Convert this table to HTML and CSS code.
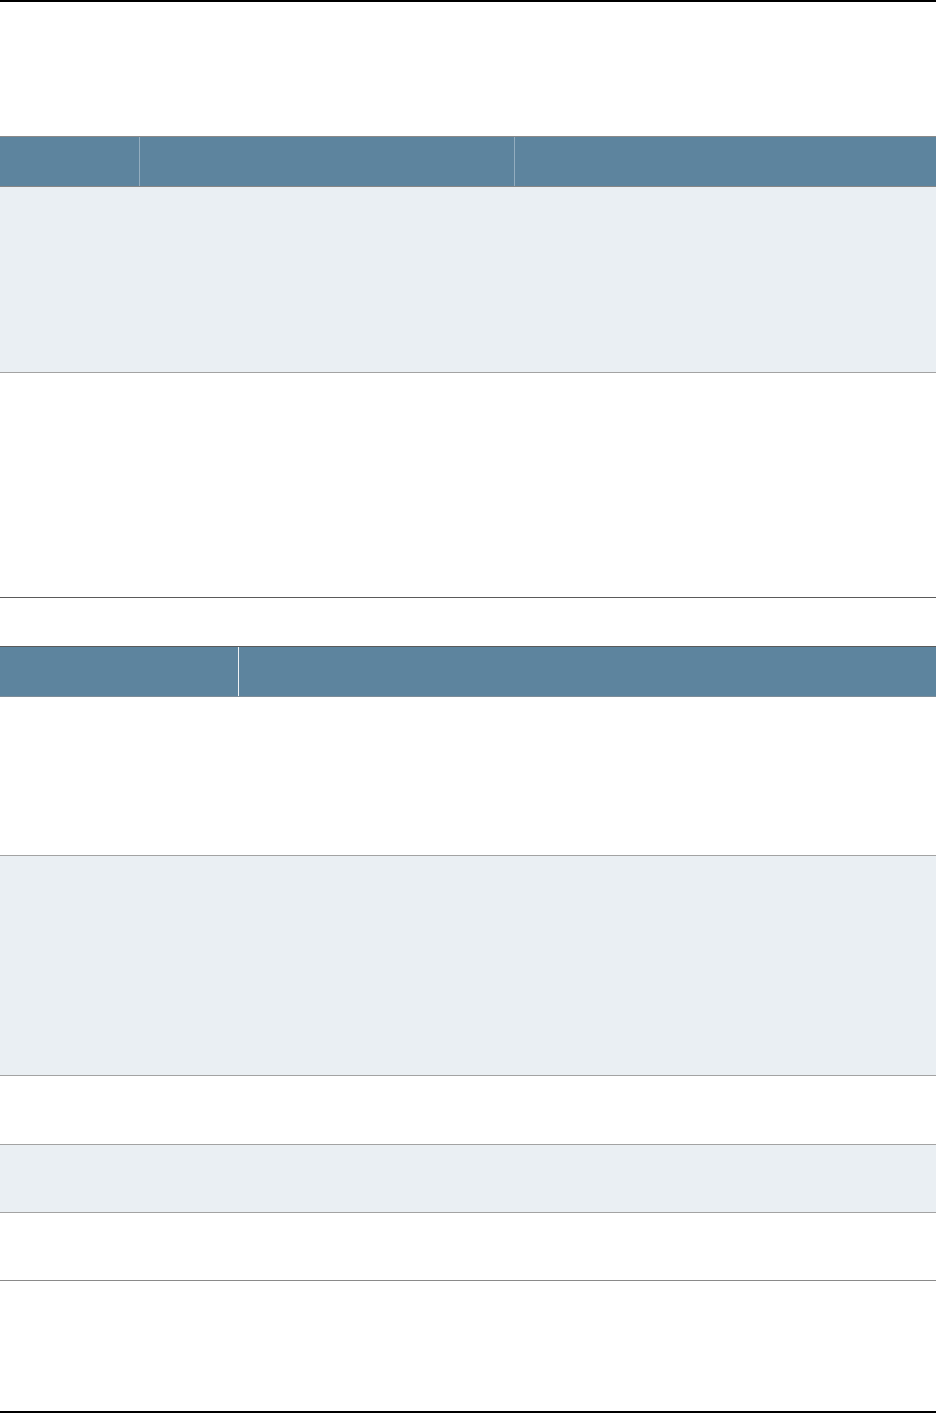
FILE: index.html
```html
<!DOCTYPE html>
<html>
<head>
<meta charset="utf-8">
<link rel="stylesheet" href="styles.css">
</head>
<body>
<div class="page">
  <div class="rule"></div>
  <div class="table t1">
    <div class="row head">
      <div class="cell"></div><div class="cell"></div><div class="cell"></div>
    </div>
    <div class="row shade r1"></div>
    <div class="row r2 last"></div>
  </div>
  <div class="table t2">
    <div class="row head">
      <div class="cell"></div><div class="cell"></div>
    </div>
    <div class="row a"></div>
    <div class="row shade b"></div>
    <div class="row c"></div>
    <div class="row shade d"></div>
    <div class="row e"></div>
  </div>
  <div class="rule bottom"></div>
</div>
</body>
</html>
```
FILE: styles.css
```css
html, body {
  margin: 0;
  padding: 0;
  background: #ffffff;
  font-family: "Liberation Sans", Arial, sans-serif;
}
.page {
  width: 936px;
  height: 1413px;
  display: flex;
  flex-direction: column;
}
.rule {
  height: 2px;
  background: #000000;
  flex: none;
}
.rule.bottom {
  margin-top: auto;
}
.table {
  border-top: 1px solid #8a8a8a;
  flex: none;
}
.t1 {
  margin-top: 134px;
}
.t2 {
  margin-top: 48px;
  border-top-color: #5a5a5a;
}
.row {
  box-sizing: border-box;
  border-bottom: 1px solid #a3a3a3;
}
.shade {
  background: #eaeff3;
}
.head {
  height: 50px;
  background: #5d849e;
  border-bottom: 1px solid #878787;
  display: grid;
}
.t1 .head {
  grid-template-columns: 139px 375px 1fr;
}
.t2 .head {
  grid-template-columns: 238px 1fr;
  border-bottom-color: #7d8d99;
}
.t1 .head .cell + .cell {
  border-left: 1px solid #93adbf;
}
.t2 .head .cell + .cell {
  border-left: 1px solid #eef2f5;
}
.r1 { height: 186px; }
.r2 { height: 225px; }
.r2.last { border-bottom-color: #5a5a5a; }
.a { height: 159px; }
.b { height: 220px; }
.c { height: 69px; }
.d { height: 68px; }
.e { height: 68px; border-bottom-color: #8a8a8a; }
```
